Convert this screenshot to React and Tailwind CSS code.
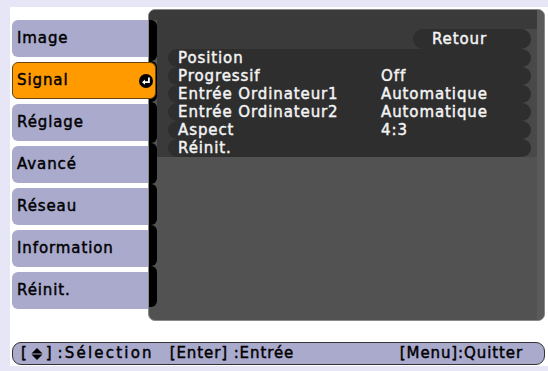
import React from 'react';

const tabs = ['Image', 'Signal', 'Réglage', 'Avancé', 'Réseau', 'Information', 'Réinit.'];

const rows = [
    ['Position', ''],
    ['Progressif', 'Off'],
    ['Entrée Ordinateur1', 'Automatique'],
    ['Entrée Ordinateur2', 'Automatique'],
    ['Aspect', '4:3'],
    ['Réinit.', ''],
];

function EnterIcon() {
    return (
        <svg width="14" height="14" viewBox="0 0 13 13">
            <circle cx="6.5" cy="6.5" r="6.5" fill="#000" />
            <path d="M9.2 3.2 V7.6 H5" stroke="#fff" strokeWidth="1.7" fill="none" />
            <path d="M5.6 5.2 L2.8 7.6 L5.6 10 Z" fill="#fff" />
        </svg>
    );
}

function UpDownIcon() {
    return (
        <svg width="12" height="14" viewBox="0 0 12 14">
            <path d="M6 1 L11.5 6.4 H0.5 Z" fill="#000" />
            <path d="M6 13 L11.5 7.6 H0.5 Z" fill="#000" />
        </svg>
    );
}

// medium-weight look: regular face, slight stroke and spacing
const txt = 'text-[15px] tracking-[0.9px] [-webkit-text-stroke:0.45px_currentColor]';

export default function App() {
    return (
        <div
            className="w-[548px] h-[371px] bg-[#e6e6f7] pt-[7px] pl-[10px] overflow-hidden"
            style={{ fontFamily: '"DejaVu Sans", Verdana, sans-serif' }}
        >
            <div className="bg-white h-[359px] flex flex-col">
                <div className="flex items-start">
                    {/* menu tabs */}
                    <div className="relative z-10 ml-[2px] mt-[13px] w-[136px] flex flex-col gap-[5px]">
                        {tabs.map((t) =>
                            t === 'Signal' ? (
                                <div
                                    key={t}
                                    className={`h-[37px] w-[144px] rounded-[6px] border border-[#6a4510] bg-[#ff9a00] flex items-center justify-between pl-[4px] pr-[2px] text-black ${txt}`}
                                >
                                    <span>{t}</span>
                                    <EnterIcon />
                                </div>
                            ) : (
                                <div
                                    key={t}
                                    className={`h-[37px] rounded-l-[6px] bg-[#aaaacd] flex items-center pl-[5px] text-black ${txt}`}
                                >
                                    {t}
                                </div>
                            )
                        )}
                    </div>

                    {/* main panel */}
                    <div className="mt-[2px] w-[397px] h-[312px] rounded-[7px] border border-[#8a8a8a] bg-[#525252] overflow-hidden flex">
                        <div className="w-[8px] flex flex-col">
                            <div className="h-[10px] bg-[#3a3a3a]" />
                            {tabs.map((t) => (
                                <div key={t} className="h-[41px] rounded-r-[6px] bg-black" />
                            ))}
                        </div>

                        <div className="flex-1 flex flex-col">
                            <div className="h-[19px] bg-[#3a3a3a]" />
                            <div className={`bg-linear-to-r from-[#3a3a3a] from-85% to-[#4a4a4a] pl-[11px] pr-[6px] text-[#f4f4f4] ${txt}`}>
                                <div className="h-[20px] flex justify-end">
                                    <div className="w-[118px] h-[20px] rounded-full bg-[#2e2e2e] flex items-center justify-end pr-[44px] leading-[20px]">
                                        Retour
                                    </div>
                                </div>
                                {rows.map(([label, value]) => (
                                    <div key={label} className="h-[18px] rounded-full bg-[#2e2e2e] flex items-center pl-[10px] leading-[18px]">
                                        <span className="w-[203px]">{label}</span>
                                        <span>{value}</span>
                                    </div>
                                ))}
                            </div>
                        </div>

                        <div className="w-[7px] bg-[#5a5a5a]" />
                    </div>
                </div>

                {/* status bar */}
                <div className={`mt-[21px] ml-[2px] w-[533px] h-[23px] rounded-[9px] border border-[#333] bg-[#aaaacd] flex items-center text-black leading-none ${txt}`}>
                    <div className="ml-[8px] flex items-center">
                        <span>[</span>
                        <span className="mx-[3px] flex items-center"><UpDownIcon /></span>
                        <span>]</span>
                        <span className="ml-[5px] tracking-[2.2px]">:Sélection</span>
                    </div>
                    <span className="ml-[16px]">[Enter] :Entrée</span>
                    <span className="ml-auto mr-[21px]">[Menu]:Quitter</span>
                </div>
            </div>
        </div>
    );
}
